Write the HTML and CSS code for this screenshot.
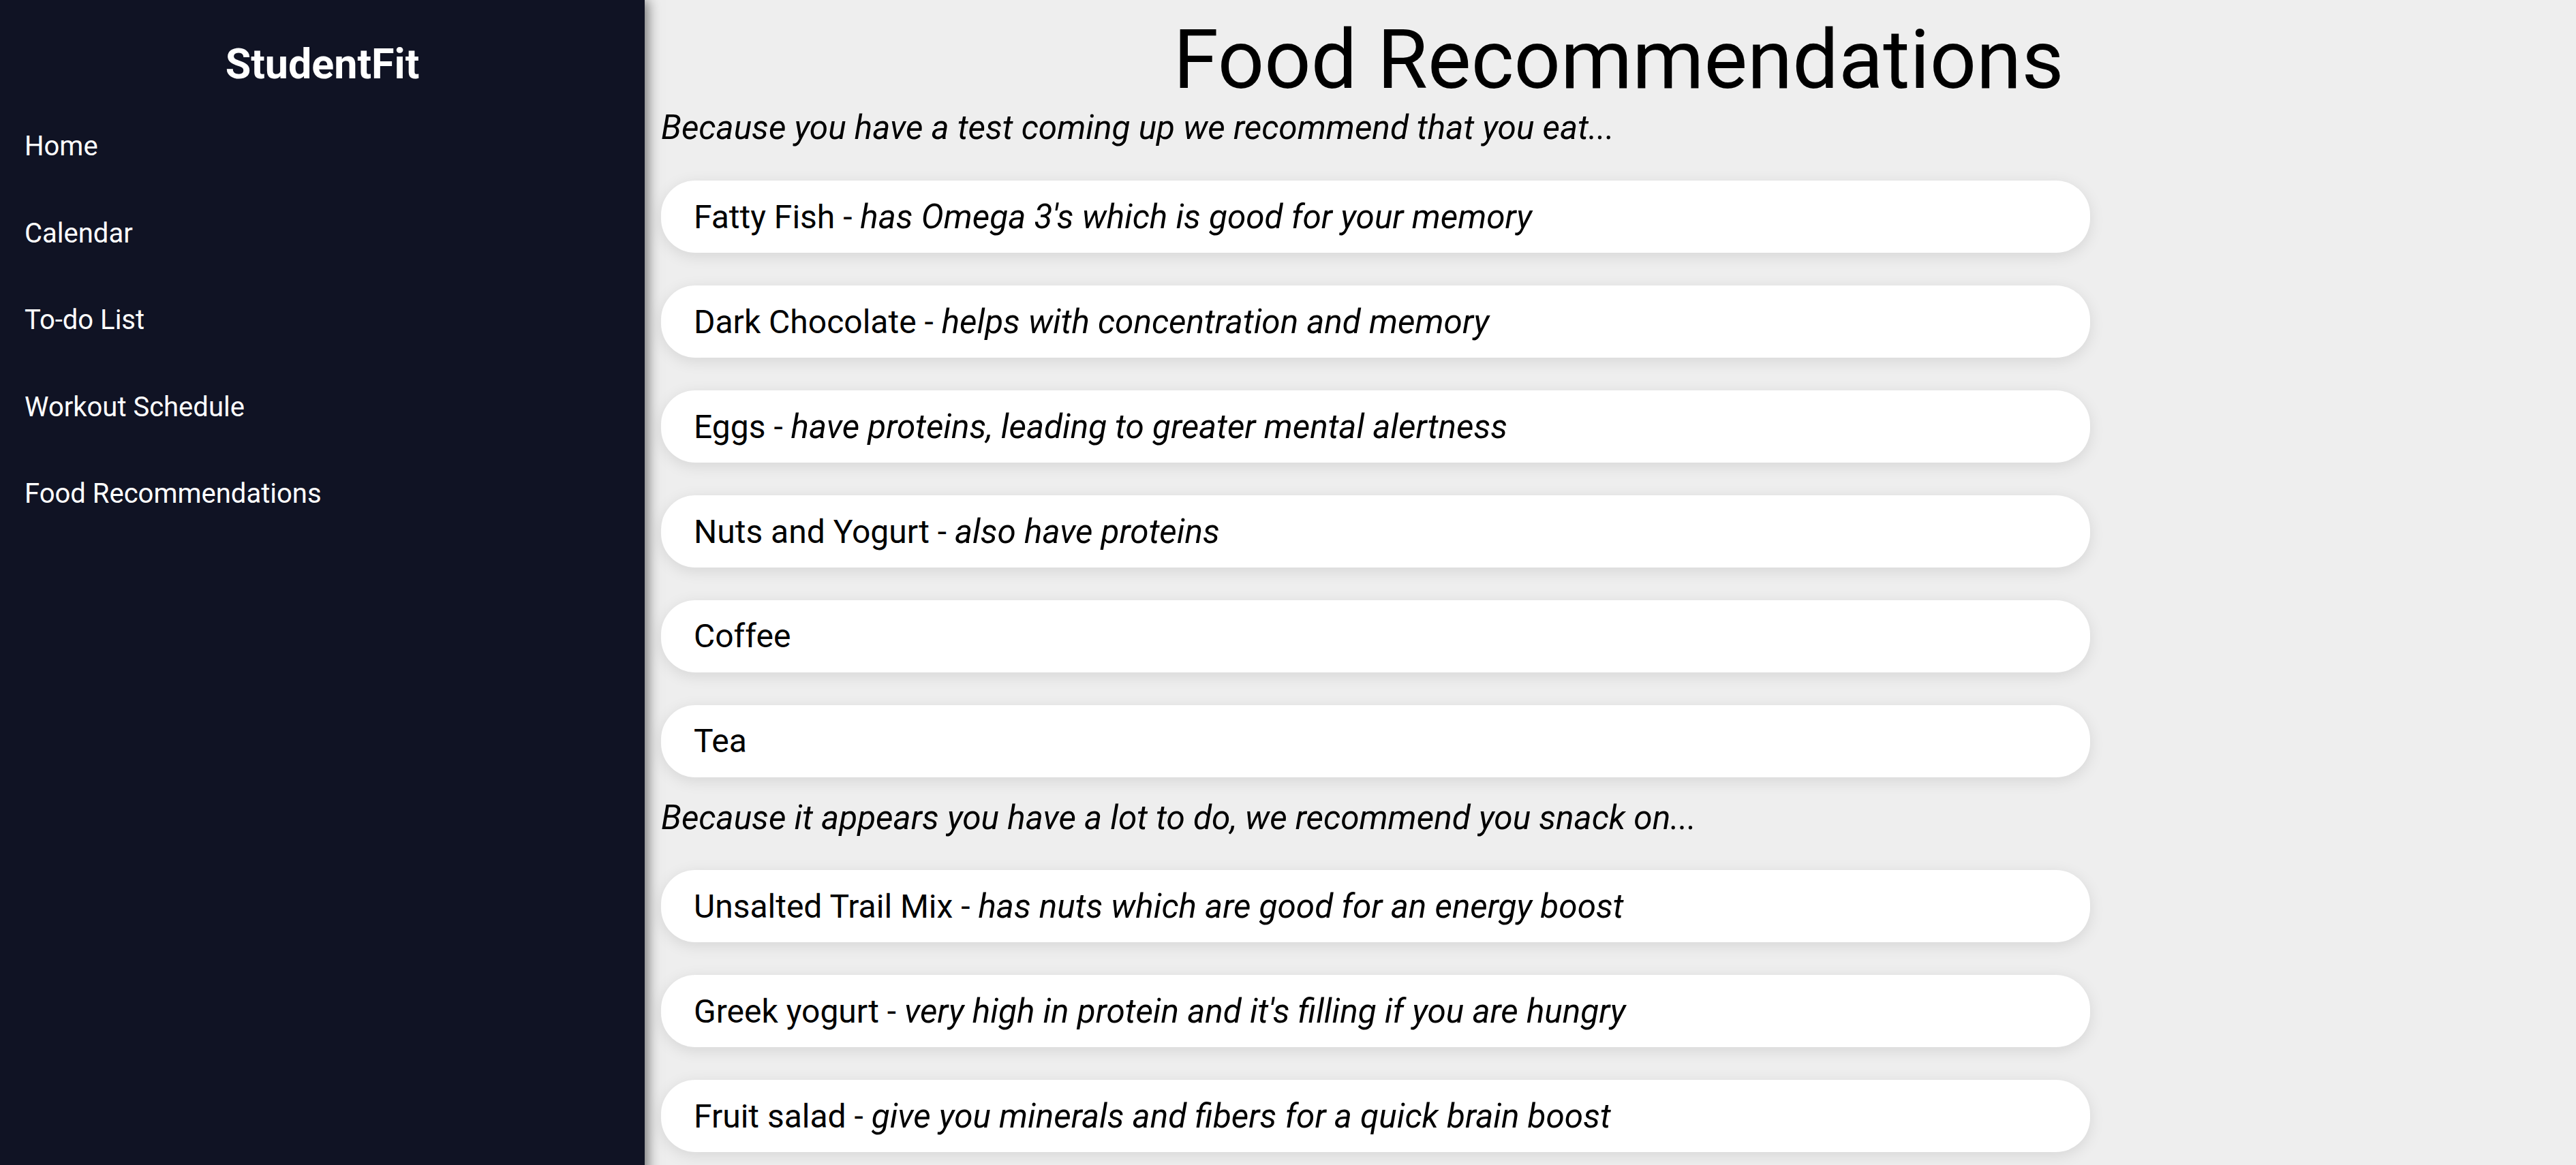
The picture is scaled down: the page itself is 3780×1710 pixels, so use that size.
FILE: index.html
```html
<!DOCTYPE html>
<html lang="en">
<head>
<meta charset="utf-8">
<title>StudentFit - Food Recommendations</title>
<link rel="stylesheet" href="styles.css">
</head>
<body>
<div class="layout">
  <aside class="sidebar">
    <div class="brand">StudentFit</div>
    <nav class="nav">
      <a class="nav-link" href="#">Home</a>
      <a class="nav-link" href="#">Calendar</a>
      <a class="nav-link" href="#">To-do List</a>
      <a class="nav-link" href="#">Workout Schedule</a>
      <a class="nav-link" href="#">Food Recommendations</a>
    </nav>
  </aside>
  <main class="main">
    <h1 class="page-title">Food Recommendations</h1>
    <p class="intro intro-first">Because you have a test coming up we recommend that you eat...</p>
    <div class="cards">
      <div class="card"><span>Fatty Fish -&nbsp;<em>has Omega 3's which is good for your memory</em></span></div>
      <div class="card"><span>Dark Chocolate -&nbsp;<em>helps with concentration and memory</em></span></div>
      <div class="card"><span>Eggs -&nbsp;<em>have proteins, leading to greater mental alertness</em></span></div>
      <div class="card"><span>Nuts and Yogurt -&nbsp;<em>also have proteins</em></span></div>
      <div class="card"><span>Coffee</span></div>
      <div class="card"><span>Tea</span></div>
    </div>
    <p class="intro intro-second">Because it appears you have a lot to do, we recommend you snack on...</p>
    <div class="cards">
      <div class="card"><span>Unsalted Trail Mix -&nbsp;<em>has nuts which are good for an energy boost</em></span></div>
      <div class="card"><span>Greek yogurt -&nbsp;<em>very high in protein and it's filling if you are hungry</em></span></div>
      <div class="card"><span>Fruit salad -&nbsp;<em>give you minerals and fibers for a quick brain boost</em></span></div>
    </div>
  </main>
</div>
</body>
</html>
```

FILE: styles.css
```css
* {
  box-sizing: border-box;
}

html, body {
  margin: 0;
  padding: 0;
}

body {
  font-family: Roboto, "Noto Sans", "Liberation Sans", sans-serif;
  background: #eeeeee;
  color: #000;
}

.layout {
  display: flex;
  min-height: 100vh;
}

.sidebar {
  position: relative;
  z-index: 1;
  flex: 0 0 946px;
  width: 946px;
  background: #101324;
  color: #fff;
  box-shadow: 4px 0 18px rgba(0, 0, 0, 0.55);
  padding-top: 58px;
}

.brand {
  font-size: 61px;
  font-weight: 700;
  text-align: center;
  line-height: normal;
}

.nav {
  display: flex;
  flex-direction: column;
  margin-top: 21px;
}

.nav-link {
  display: block;
  color: #fff;
  text-decoration: none;
  font-size: 40px;
  line-height: 47.5px;
  padding: 40px 36px;
}

.main {
  flex: 1;
  padding: 0 0 48px 24px;
  display: flex;
  flex-direction: column;
}

.page-title {
  margin: 18px 0 0;
  font-size: 120px;
  font-weight: 400;
  line-height: normal;
  text-align: center;
}

.intro {
  font-size: 49.5px;
  font-style: italic;
  line-height: normal;
  margin: 0;
}

.intro-first {
  margin-top: 0;
}

.intro-second {
  margin-top: 30px;
}

.cards {
  display: flex;
  flex-direction: column;
  gap: 48px;
  margin-top: 49px;
}

.intro-second + .cards {
  margin-top: 48px;
}

.card {
  width: 2097px;
  height: 106px;
  display: flex;
  align-items: center;
  padding: 0 48px;
  background: #fff;
  border-radius: 50px;
  box-shadow: 0 5px 22px rgba(0, 0, 0, 0.1);
  font-size: 48px;
  line-height: 56px;
  white-space: pre;
}

.card em {
  font-style: italic;
  font-size: 1.03em;
}
```
